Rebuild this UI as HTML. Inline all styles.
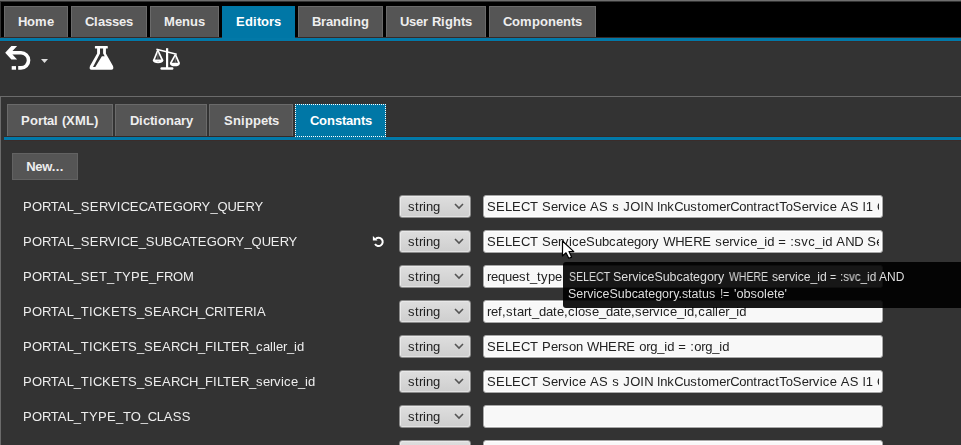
<!DOCTYPE html>
<html><head><meta charset="utf-8">
<style>
html,body{margin:0;padding:0;}
body{width:961px;height:445px;overflow:hidden;position:relative;background:#333;font-family:"Liberation Sans",sans-serif;}
.abs{position:absolute;}
#topline{left:0;top:0;width:961px;height:1px;background:#6e6e6e;}
#topbar{left:1px;top:2px;width:960px;height:35px;background:#000;}
.tab{position:absolute;box-sizing:border-box;background:#555;border:1px solid #6a6a6a;border-bottom:none;color:#eee;font-weight:bold;font-size:13px;text-align:center;white-space:pre;z-index:1;}
.tab.on{background:#0077a6;border-color:#0077a6;color:#fff;z-index:2;}
.mt{top:6px;height:31px;line-height:30px;}
.blue1{left:0;top:37px;width:961px;height:5px;box-sizing:border-box;background:#0279a8;border-top:1px solid #362a28;border-bottom:1px solid #3a2c2a;}
#divider{left:0;top:96px;width:961px;height:1px;background:#6b6b6b;}
#leftline{left:0;top:96px;width:1px;height:349px;background:#6b6b6b;}
.st{top:104px;height:32px;line-height:32px;padding-left:1px;}
.blue2{left:4px;top:136px;width:957px;height:5px;box-sizing:border-box;background:#0279a8;border-top:1px solid #362a28;border-bottom:1px solid #3a2c2a;}
#newbtn{left:12px;top:153px;width:66px;height:27px;box-sizing:border-box;background:#555;border:1px solid #626262;color:#eee;font-weight:bold;font-size:13px;line-height:25px;text-align:center;white-space:pre;}
.lbl{will-change:transform;position:absolute;left:23px;color:#eee;font-size:13px;white-space:pre;}
.sel{position:absolute;left:399px;width:72px;height:23px;box-sizing:border-box;border:1px solid #8a8a8a;border-radius:3px;background:linear-gradient(#dedede,#cecece);box-shadow:inset 1px 1px 0 #e9e9e9,inset -1px -1px 0 #e2e2e2;color:#222;font-size:13px;line-height:21px;padding-left:8px;white-space:pre;}
.gs{will-change:transform;display:inline-block;}
.sel svg{position:absolute;right:6px;top:7px;}
.inp{position:absolute;left:483px;width:400px;height:23px;box-sizing:border-box;border:1px solid #a8a8a8;border-radius:3px;background:#f8f8f8;box-shadow:inset 0 0 0 1px #fff;color:#222;font-size:13px;line-height:21px;padding-left:3px;}
.inp div{will-change:transform;width:392px;overflow:hidden;white-space:pre;}
#tip{left:563px;top:262px;width:420px;height:46px;background:rgba(0,0,0,0.91);border-radius:3px;color:#ddd;font-size:12px;line-height:17px;white-space:pre;z-index:5;}
#tip span{position:absolute;transform-origin:0 0;will-change:transform;}
#cursor{z-index:6;}
</style></head><body>
<div class="abs" id="topline"></div>
<div class="abs" id="topbar"></div>
<div class="tab mt" style="left:4px;width:64px;"><span style="letter-spacing:-0.39px">H</span><span style="letter-spacing:0.06px">o</span><span style="letter-spacing:0.44px">m</span><span style="letter-spacing:-0.23px">e</span></div>
<div class="tab mt" style="left:71px;width:76px;"><span style="letter-spacing:-0.39px">C</span><span style="letter-spacing:0.39px">l</span><span style="letter-spacing:-0.23px">asses</span></div>
<div class="tab mt" style="left:150px;width:69px;"><span style="letter-spacing:0.17px">M</span><span style="letter-spacing:-0.23px">e</span><span style="letter-spacing:0.06px">nu</span><span style="letter-spacing:-0.23px">s</span></div>
<div class="tab mt on" style="left:222px;width:73px;height:32px;"><span style="letter-spacing:0.33px">E</span><span style="letter-spacing:0.06px">d</span><span style="letter-spacing:0.39px">i</span><span style="letter-spacing:-0.33px">t</span><span style="letter-spacing:0.06px">o</span><span style="letter-spacing:-0.06px">r</span><span style="letter-spacing:-0.23px">s</span></div>
<div class="tab mt" style="left:298px;width:85px;"><span style="letter-spacing:-0.39px">B</span><span style="letter-spacing:-0.06px">r</span><span style="letter-spacing:-0.23px">a</span><span style="letter-spacing:0.06px">nd</span><span style="letter-spacing:0.39px">i</span><span style="letter-spacing:0.06px">ng</span></div>
<div class="tab mt" style="left:386px;width:100px;"><span style="letter-spacing:-0.39px">U</span><span style="letter-spacing:-0.23px">se</span><span style="letter-spacing:-0.06px">r</span><span style="letter-spacing:0.39px"> </span><span style="letter-spacing:-0.39px">R</span><span style="letter-spacing:0.39px">i</span><span style="letter-spacing:0.06px">gh</span><span style="letter-spacing:-0.33px">t</span><span style="letter-spacing:-0.23px">s</span></div>
<div class="tab mt" style="left:489px;width:107px;"><span style="letter-spacing:-0.39px">C</span><span style="letter-spacing:0.06px">o</span><span style="letter-spacing:0.44px">m</span><span style="letter-spacing:0.06px">pon</span><span style="letter-spacing:-0.23px">e</span><span style="letter-spacing:0.06px">n</span><span style="letter-spacing:-0.33px">t</span><span style="letter-spacing:-0.23px">s</span></div>
<div class="abs blue1"></div>
<svg class="abs" style="left:0;top:41px" width="200" height="55" viewBox="0 41 200 55">
  <path d="M11 52.8 H21 A7.55 7.55 0 0 1 21 67.9 H18.2" fill="none" stroke="#fff" stroke-width="3.6"/>
  <path d="M5.2 52.8 L11.4 46 H17.1 L12.5 51 V54.6 L17.1 59.6 H11.4 Z" fill="#fff"/>
  <rect x="11.7" y="66.1" width="4.3" height="3.6" fill="#fff"/>
  <path d="M41 59 L48 59 L44.5 63 Z" fill="#ddd"/>
  <path d="M95.4 45.9 H107.3 Q107.8 45.9 107.8 46.4 V47.9 Q107.8 48.4 107.3 48.4 H105.9 V53.4 L113 66 Q114.2 69.8 111.3 69.8 H91.6 Q88.7 69.8 90 66 L97.1 53.4 V48.4 H95.4 Q94.9 48.4 94.9 47.9 V46.4 Q94.9 45.9 95.4 45.9 Z M100 48.4 V53.6 L93 67.1 H95.3 L101.9 56.3 H104.7 L103.1 53.6 V48.4 Z" fill="#fff" fill-rule="evenodd"/>
  <g fill="#fff">
    <rect x="166" y="48.2" width="2.2" height="20"/>
    <rect x="160.4" y="67.2" width="13" height="2.5" rx="1.2"/>
    <path d="M156.6 48.4 L176.9 53.4 L176.5 55.1 L156.2 50.1 Z"/>
  </g>
  <g fill="none" stroke="#fff" stroke-width="1.7" stroke-linejoin="round">
    <path d="M157.8 50.3 L153.8 60.2 M157.8 50.3 L162.4 60.2"/>
    <path d="M175.4 54.6 L170.6 63.4 M175.4 54.6 L179.2 63.4"/>
  </g>
  <g fill="none" stroke="#fff" stroke-width="1.8" stroke-linejoin="round">
    <path d="M153.6 60.3 H162.6 Q162 62.3 158.1 62.3 Q154.2 62.3 153.6 60.3 Z"/>
    <path d="M170.8 63.6 H179 Q178.4 65.4 174.9 65.4 Q171.4 65.4 170.8 63.6 Z"/>
  </g>
  <g stroke="#999" stroke-width="0.7"><path d="M157.9 52 V59.6 M175.3 56.5 V62.8"/></g>
</svg>
<div class="abs" id="divider"></div>
<div class="abs" id="leftline"></div>
<div class="tab st" style="left:7px;width:106px;padding-left:0;padding-right:1px;"><span style="letter-spacing:0.33px">P</span><span style="letter-spacing:0.06px">o</span><span style="letter-spacing:-0.06px">r</span><span style="letter-spacing:-0.33px">t</span><span style="letter-spacing:-0.23px">a</span><span style="letter-spacing:0.39px">l </span><span style="letter-spacing:-0.33px">(</span><span style="letter-spacing:0.33px">X</span><span style="letter-spacing:0.17px">M</span><span style="letter-spacing:0.06px">L</span><span style="letter-spacing:-0.33px">)</span></div>
<div class="tab st" style="left:115px;width:92px;"><span style="letter-spacing:-0.39px">D</span><span style="letter-spacing:0.39px">i</span><span style="letter-spacing:-0.23px">c</span><span style="letter-spacing:-0.33px">t</span><span style="letter-spacing:0.39px">i</span><span style="letter-spacing:0.06px">on</span><span style="letter-spacing:-0.23px">a</span><span style="letter-spacing:-0.06px">r</span><span style="letter-spacing:-0.23px">y</span></div>
<div class="tab st" style="left:209px;width:84px;"><span style="letter-spacing:0.33px">S</span><span style="letter-spacing:0.06px">n</span><span style="letter-spacing:0.39px">i</span><span style="letter-spacing:0.06px">pp</span><span style="letter-spacing:-0.23px">e</span><span style="letter-spacing:-0.33px">t</span><span style="letter-spacing:-0.23px">s</span></div>
<div class="tab st on" style="left:295px;width:91px;height:33px;outline:1px dotted #fff;outline-offset:-1px;"><span style="letter-spacing:-0.39px">C</span><span style="letter-spacing:0.06px">on</span><span style="letter-spacing:-0.23px">s</span><span style="letter-spacing:-0.33px">t</span><span style="letter-spacing:-0.23px">a</span><span style="letter-spacing:0.06px">n</span><span style="letter-spacing:-0.33px">t</span><span style="letter-spacing:-0.23px">s</span></div>
<div class="abs blue2"></div>
<div class="abs" id="newbtn"><span style="letter-spacing:-0.39px">N</span><span style="letter-spacing:-0.23px">e</span><span style="letter-spacing:-0.59px">w</span><span style="letter-spacing:0.39px">...</span></div>
<div class="lbl" style="top:199px"><span style="letter-spacing:0.33px">P</span><span style="letter-spacing:-0.11px">O</span><span style="letter-spacing:-0.62px">R</span><span style="letter-spacing:-0.91px">T</span><span style="letter-spacing:0.33px">A</span><span style="letter-spacing:-0.23px">L_</span><span style="letter-spacing:0.33px">SE</span><span style="letter-spacing:-0.62px">R</span><span style="letter-spacing:0.33px">V</span><span style="letter-spacing:0.39px">I</span><span style="letter-spacing:-0.39px">C</span><span style="letter-spacing:0.33px">E</span><span style="letter-spacing:-0.39px">C</span><span style="letter-spacing:-0.64px">A</span><span style="letter-spacing:0.06px">T</span><span style="letter-spacing:0.33px">E</span><span style="letter-spacing:-0.11px">GO</span><span style="letter-spacing:-0.62px">R</span><span style="letter-spacing:0.33px">Y</span><span style="letter-spacing:-0.23px">_</span><span style="letter-spacing:-0.11px">Q</span><span style="letter-spacing:-0.39px">U</span><span style="letter-spacing:0.33px">E</span><span style="letter-spacing:-0.62px">R</span><span style="letter-spacing:0.33px">Y</span></div>
<div class="sel" style="top:195px"><span class="gs"><span style="letter-spacing:0.5px">s</span><span style="letter-spacing:0.39px">t</span><span style="letter-spacing:-0.33px">r</span><span style="letter-spacing:0.11px">i</span><span style="letter-spacing:-0.23px">ng</span></span><svg width="10" height="7" viewBox="0 0 10 7"><path d="M1 1 L5 5 L9 1" fill="none" stroke="#555" stroke-width="1.6"/></svg></div>
<div class="inp" style="top:195px"><div><span style="letter-spacing:0.33px">SE</span><span style="letter-spacing:-0.23px">L</span><span style="letter-spacing:0.33px">E</span><span style="letter-spacing:-0.39px">C</span><span style="letter-spacing:0.06px">T</span><span style="letter-spacing:0.39px"> </span><span style="letter-spacing:0.33px">S</span><span style="letter-spacing:-0.23px">e</span><span style="letter-spacing:-0.33px">r</span><span style="letter-spacing:0.5px">v</span><span style="letter-spacing:0.11px">i</span><span style="letter-spacing:0.5px">c</span><span style="letter-spacing:-0.23px">e</span><span style="letter-spacing:0.39px"> </span><span style="letter-spacing:0.33px">AS</span><span style="letter-spacing:0.39px"> </span><span style="letter-spacing:0.5px">s</span><span style="letter-spacing:0.39px"> </span><span style="letter-spacing:0.5px">J</span><span style="letter-spacing:-0.11px">O</span><span style="letter-spacing:0.39px">I</span><span style="letter-spacing:-0.39px">N</span><span style="letter-spacing:0.39px"> </span><span style="letter-spacing:0.11px">l</span><span style="letter-spacing:-0.23px">n</span><span style="letter-spacing:0.5px">k</span><span style="letter-spacing:-0.39px">C</span><span style="letter-spacing:-0.23px">u</span><span style="letter-spacing:0.5px">s</span><span style="letter-spacing:0.39px">t</span><span style="letter-spacing:-0.23px">o</span><span style="letter-spacing:0.17px">m</span><span style="letter-spacing:-0.23px">e</span><span style="letter-spacing:-0.33px">r</span><span style="letter-spacing:-0.39px">C</span><span style="letter-spacing:-0.23px">on</span><span style="letter-spacing:0.39px">t</span><span style="letter-spacing:-0.33px">r</span><span style="letter-spacing:-0.23px">a</span><span style="letter-spacing:0.5px">c</span><span style="letter-spacing:0.39px">t</span><span style="letter-spacing:-1.38px">T</span><span style="letter-spacing:-0.23px">o</span><span style="letter-spacing:0.33px">S</span><span style="letter-spacing:-0.23px">e</span><span style="letter-spacing:-0.33px">r</span><span style="letter-spacing:0.5px">v</span><span style="letter-spacing:0.11px">i</span><span style="letter-spacing:0.5px">c</span><span style="letter-spacing:-0.23px">e</span><span style="letter-spacing:0.39px"> </span><span style="letter-spacing:0.33px">AS</span><span style="letter-spacing:0.39px"> </span><span style="letter-spacing:0.11px">l</span><span style="letter-spacing:-0.23px">1</span><span style="letter-spacing:0.39px"> </span><span style="letter-spacing:-0.11px">O</span><span style="letter-spacing:-0.39px">N</span><span style="letter-spacing:0.39px"> </span><span style="letter-spacing:0.11px">l</span><span style="letter-spacing:-0.23px">1</span><span style="letter-spacing:0.39px">.</span><span style="letter-spacing:0.5px">s</span><span style="letter-spacing:-0.23px">e</span><span style="letter-spacing:-0.33px">r</span><span style="letter-spacing:0.5px">v</span><span style="letter-spacing:0.11px">i</span><span style="letter-spacing:0.5px">c</span><span style="letter-spacing:-0.23px">e_</span><span style="letter-spacing:0.11px">i</span><span style="letter-spacing:-0.23px">d</span><span style="letter-spacing:0.41px">=</span><span style="letter-spacing:0.5px">s</span><span style="letter-spacing:0.39px">.</span><span style="letter-spacing:0.11px">i</span><span style="letter-spacing:-0.23px">d</span></div></div>
<div class="lbl" style="top:234px"><span style="letter-spacing:0.33px">P</span><span style="letter-spacing:-0.11px">O</span><span style="letter-spacing:-0.62px">R</span><span style="letter-spacing:-0.91px">T</span><span style="letter-spacing:0.33px">A</span><span style="letter-spacing:-0.23px">L_</span><span style="letter-spacing:0.33px">SE</span><span style="letter-spacing:-0.62px">R</span><span style="letter-spacing:0.33px">V</span><span style="letter-spacing:0.39px">I</span><span style="letter-spacing:-0.39px">C</span><span style="letter-spacing:0.33px">E</span><span style="letter-spacing:-0.23px">_</span><span style="letter-spacing:0.33px">S</span><span style="letter-spacing:-0.39px">U</span><span style="letter-spacing:0.33px">B</span><span style="letter-spacing:-0.39px">C</span><span style="letter-spacing:-0.64px">A</span><span style="letter-spacing:0.06px">T</span><span style="letter-spacing:0.33px">E</span><span style="letter-spacing:-0.11px">GO</span><span style="letter-spacing:-0.62px">R</span><span style="letter-spacing:0.33px">Y</span><span style="letter-spacing:-0.23px">_</span><span style="letter-spacing:-0.11px">Q</span><span style="letter-spacing:-0.39px">U</span><span style="letter-spacing:0.33px">E</span><span style="letter-spacing:-0.62px">R</span><span style="letter-spacing:0.33px">Y</span></div>
<svg class="abs" style="left:370px;top:233px" width="17" height="17" viewBox="0 0 17 17"><path d="M5.7 6.0 A4.1 4.1 0 1 1 5.05 10.95" fill="none" stroke="#fff" stroke-width="2"/><path d="M2.9 2.9 L7.5 7.6 L2.9 7.6 Z" fill="#fff"/></svg>
<div class="sel" style="top:230px"><span class="gs"><span style="letter-spacing:0.5px">s</span><span style="letter-spacing:0.39px">t</span><span style="letter-spacing:-0.33px">r</span><span style="letter-spacing:0.11px">i</span><span style="letter-spacing:-0.23px">ng</span></span><svg width="10" height="7" viewBox="0 0 10 7"><path d="M1 1 L5 5 L9 1" fill="none" stroke="#555" stroke-width="1.6"/></svg></div>
<div class="inp" style="top:230px"><div><span style="letter-spacing:0.33px">SE</span><span style="letter-spacing:-0.23px">L</span><span style="letter-spacing:0.33px">E</span><span style="letter-spacing:-0.39px">C</span><span style="letter-spacing:0.06px">T</span><span style="letter-spacing:0.39px"> </span><span style="letter-spacing:0.33px">S</span><span style="letter-spacing:-0.23px">e</span><span style="letter-spacing:-0.33px">r</span><span style="letter-spacing:0.5px">v</span><span style="letter-spacing:0.11px">i</span><span style="letter-spacing:0.5px">c</span><span style="letter-spacing:-0.23px">e</span><span style="letter-spacing:0.33px">S</span><span style="letter-spacing:-0.23px">ub</span><span style="letter-spacing:0.5px">c</span><span style="letter-spacing:-0.23px">a</span><span style="letter-spacing:0.39px">t</span><span style="letter-spacing:-0.23px">ego</span><span style="letter-spacing:-0.33px">r</span><span style="letter-spacing:0.5px">y</span><span style="letter-spacing:0.39px"> </span><span style="letter-spacing:-0.27px">W</span><span style="letter-spacing:-0.39px">H</span><span style="letter-spacing:0.33px">E</span><span style="letter-spacing:-0.39px">R</span><span style="letter-spacing:0.33px">E</span><span style="letter-spacing:0.39px"> </span><span style="letter-spacing:0.5px">s</span><span style="letter-spacing:-0.23px">e</span><span style="letter-spacing:-0.33px">r</span><span style="letter-spacing:0.5px">v</span><span style="letter-spacing:0.11px">i</span><span style="letter-spacing:0.5px">c</span><span style="letter-spacing:-0.23px">e_</span><span style="letter-spacing:0.11px">i</span><span style="letter-spacing:-0.23px">d</span><span style="letter-spacing:0.39px"> </span><span style="letter-spacing:0.41px">=</span><span style="letter-spacing:0.39px"> :</span><span style="letter-spacing:0.5px">svc</span><span style="letter-spacing:-0.23px">_</span><span style="letter-spacing:0.11px">i</span><span style="letter-spacing:-0.23px">d</span><span style="letter-spacing:0.39px"> </span><span style="letter-spacing:0.33px">A</span><span style="letter-spacing:-0.39px">ND</span><span style="letter-spacing:0.39px"> </span><span style="letter-spacing:0.33px">S</span><span style="letter-spacing:-0.23px">e</span><span style="letter-spacing:-0.33px">r</span><span style="letter-spacing:0.5px">v</span><span style="letter-spacing:0.11px">i</span><span style="letter-spacing:0.5px">c</span><span style="letter-spacing:-0.23px">e</span><span style="letter-spacing:0.33px">S</span><span style="letter-spacing:-0.23px">ub</span><span style="letter-spacing:0.5px">c</span><span style="letter-spacing:-0.23px">a</span><span style="letter-spacing:0.39px">t</span><span style="letter-spacing:-0.23px">ego</span><span style="letter-spacing:-0.33px">r</span><span style="letter-spacing:-0.47px">y</span><span style="letter-spacing:0.39px">.</span><span style="letter-spacing:0.5px">s</span><span style="letter-spacing:0.39px">t</span><span style="letter-spacing:-0.23px">a</span><span style="letter-spacing:0.39px">t</span><span style="letter-spacing:-0.23px">u</span><span style="letter-spacing:0.5px">s</span></div></div>
<div class="lbl" style="top:269px"><span style="letter-spacing:0.33px">P</span><span style="letter-spacing:-0.11px">O</span><span style="letter-spacing:-0.62px">R</span><span style="letter-spacing:-0.91px">T</span><span style="letter-spacing:0.33px">A</span><span style="letter-spacing:-0.23px">L_</span><span style="letter-spacing:0.33px">SE</span><span style="letter-spacing:0.06px">T</span><span style="letter-spacing:-0.23px">_</span><span style="letter-spacing:0.06px">T</span><span style="letter-spacing:0.33px">YPE</span><span style="letter-spacing:-0.23px">_</span><span style="letter-spacing:0.06px">F</span><span style="letter-spacing:-0.39px">R</span><span style="letter-spacing:-0.11px">O</span><span style="letter-spacing:0.17px">M</span></div>
<div class="sel" style="top:265px"><span class="gs"><span style="letter-spacing:0.5px">s</span><span style="letter-spacing:0.39px">t</span><span style="letter-spacing:-0.33px">r</span><span style="letter-spacing:0.11px">i</span><span style="letter-spacing:-0.23px">ng</span></span><svg width="10" height="7" viewBox="0 0 10 7"><path d="M1 1 L5 5 L9 1" fill="none" stroke="#555" stroke-width="1.6"/></svg></div>
<div class="inp" style="top:265px"><div><span style="letter-spacing:-0.33px">r</span><span style="letter-spacing:-0.23px">eque</span><span style="letter-spacing:0.5px">s</span><span style="letter-spacing:0.39px">t</span><span style="letter-spacing:-0.23px">_</span><span style="letter-spacing:0.39px">t</span><span style="letter-spacing:0.5px">y</span><span style="letter-spacing:-0.23px">pe</span></div></div>
<div class="lbl" style="top:304px"><span style="letter-spacing:0.33px">P</span><span style="letter-spacing:-0.11px">O</span><span style="letter-spacing:-0.62px">R</span><span style="letter-spacing:-0.91px">T</span><span style="letter-spacing:0.33px">A</span><span style="letter-spacing:-0.23px">L_</span><span style="letter-spacing:0.06px">T</span><span style="letter-spacing:0.39px">I</span><span style="letter-spacing:-0.39px">C</span><span style="letter-spacing:0.33px">KE</span><span style="letter-spacing:0.06px">T</span><span style="letter-spacing:0.33px">S</span><span style="letter-spacing:-0.23px">_</span><span style="letter-spacing:0.33px">SEA</span><span style="letter-spacing:-0.39px">RCH</span><span style="letter-spacing:-0.23px">_</span><span style="letter-spacing:-0.39px">CR</span><span style="letter-spacing:0.39px">I</span><span style="letter-spacing:0.06px">T</span><span style="letter-spacing:0.33px">E</span><span style="letter-spacing:-0.39px">R</span><span style="letter-spacing:0.39px">I</span><span style="letter-spacing:0.33px">A</span></div>
<div class="sel" style="top:300px"><span class="gs"><span style="letter-spacing:0.5px">s</span><span style="letter-spacing:0.39px">t</span><span style="letter-spacing:-0.33px">r</span><span style="letter-spacing:0.11px">i</span><span style="letter-spacing:-0.23px">ng</span></span><svg width="10" height="7" viewBox="0 0 10 7"><path d="M1 1 L5 5 L9 1" fill="none" stroke="#555" stroke-width="1.6"/></svg></div>
<div class="inp" style="top:300px"><div><span style="letter-spacing:-0.33px">r</span><span style="letter-spacing:-0.23px">e</span><span style="letter-spacing:0.39px">f,</span><span style="letter-spacing:0.5px">s</span><span style="letter-spacing:0.39px">t</span><span style="letter-spacing:-0.23px">a</span><span style="letter-spacing:-0.33px">r</span><span style="letter-spacing:0.39px">t</span><span style="letter-spacing:-0.23px">_da</span><span style="letter-spacing:0.39px">t</span><span style="letter-spacing:-0.23px">e</span><span style="letter-spacing:0.39px">,</span><span style="letter-spacing:0.5px">c</span><span style="letter-spacing:0.11px">l</span><span style="letter-spacing:-0.23px">o</span><span style="letter-spacing:0.5px">s</span><span style="letter-spacing:-0.23px">e_da</span><span style="letter-spacing:0.39px">t</span><span style="letter-spacing:-0.23px">e</span><span style="letter-spacing:0.39px">,</span><span style="letter-spacing:0.5px">s</span><span style="letter-spacing:-0.23px">e</span><span style="letter-spacing:-0.33px">r</span><span style="letter-spacing:0.5px">v</span><span style="letter-spacing:0.11px">i</span><span style="letter-spacing:0.5px">c</span><span style="letter-spacing:-0.23px">e_</span><span style="letter-spacing:0.11px">i</span><span style="letter-spacing:-0.23px">d</span><span style="letter-spacing:0.39px">,</span><span style="letter-spacing:0.5px">c</span><span style="letter-spacing:-0.23px">a</span><span style="letter-spacing:0.11px">ll</span><span style="letter-spacing:-0.23px">e</span><span style="letter-spacing:-0.33px">r</span><span style="letter-spacing:-0.23px">_</span><span style="letter-spacing:0.11px">i</span><span style="letter-spacing:-0.23px">d</span></div></div>
<div class="lbl" style="top:339px"><span style="letter-spacing:0.33px">P</span><span style="letter-spacing:-0.11px">O</span><span style="letter-spacing:-0.62px">R</span><span style="letter-spacing:-0.91px">T</span><span style="letter-spacing:0.33px">A</span><span style="letter-spacing:-0.23px">L_</span><span style="letter-spacing:0.06px">T</span><span style="letter-spacing:0.39px">I</span><span style="letter-spacing:-0.39px">C</span><span style="letter-spacing:0.33px">KE</span><span style="letter-spacing:0.06px">T</span><span style="letter-spacing:0.33px">S</span><span style="letter-spacing:-0.23px">_</span><span style="letter-spacing:0.33px">SEA</span><span style="letter-spacing:-0.39px">RCH</span><span style="letter-spacing:-0.23px">_</span><span style="letter-spacing:0.06px">F</span><span style="letter-spacing:0.39px">I</span><span style="letter-spacing:-1.19px">L</span><span style="letter-spacing:0.06px">T</span><span style="letter-spacing:0.33px">E</span><span style="letter-spacing:-0.39px">R</span><span style="letter-spacing:-0.23px">_</span><span style="letter-spacing:0.5px">c</span><span style="letter-spacing:-0.23px">a</span><span style="letter-spacing:0.11px">ll</span><span style="letter-spacing:-0.23px">e</span><span style="letter-spacing:-0.33px">r</span><span style="letter-spacing:-0.23px">_</span><span style="letter-spacing:0.11px">i</span><span style="letter-spacing:-0.23px">d</span></div>
<div class="sel" style="top:335px"><span class="gs"><span style="letter-spacing:0.5px">s</span><span style="letter-spacing:0.39px">t</span><span style="letter-spacing:-0.33px">r</span><span style="letter-spacing:0.11px">i</span><span style="letter-spacing:-0.23px">ng</span></span><svg width="10" height="7" viewBox="0 0 10 7"><path d="M1 1 L5 5 L9 1" fill="none" stroke="#555" stroke-width="1.6"/></svg></div>
<div class="inp" style="top:335px"><div><span style="letter-spacing:0.33px">SE</span><span style="letter-spacing:-0.23px">L</span><span style="letter-spacing:0.33px">E</span><span style="letter-spacing:-0.39px">C</span><span style="letter-spacing:0.06px">T</span><span style="letter-spacing:0.39px"> </span><span style="letter-spacing:0.33px">P</span><span style="letter-spacing:-0.23px">e</span><span style="letter-spacing:-0.33px">r</span><span style="letter-spacing:0.5px">s</span><span style="letter-spacing:-0.23px">on</span><span style="letter-spacing:0.39px"> </span><span style="letter-spacing:-0.27px">W</span><span style="letter-spacing:-0.39px">H</span><span style="letter-spacing:0.33px">E</span><span style="letter-spacing:-0.39px">R</span><span style="letter-spacing:0.33px">E</span><span style="letter-spacing:0.39px"> </span><span style="letter-spacing:-0.23px">o</span><span style="letter-spacing:-0.33px">r</span><span style="letter-spacing:-0.23px">g_</span><span style="letter-spacing:0.11px">i</span><span style="letter-spacing:-0.23px">d</span><span style="letter-spacing:0.39px"> </span><span style="letter-spacing:0.41px">=</span><span style="letter-spacing:0.39px"> :</span><span style="letter-spacing:-0.23px">o</span><span style="letter-spacing:-0.33px">r</span><span style="letter-spacing:-0.23px">g_</span><span style="letter-spacing:0.11px">i</span><span style="letter-spacing:-0.23px">d</span></div></div>
<div class="lbl" style="top:374px"><span style="letter-spacing:0.33px">P</span><span style="letter-spacing:-0.11px">O</span><span style="letter-spacing:-0.62px">R</span><span style="letter-spacing:-0.91px">T</span><span style="letter-spacing:0.33px">A</span><span style="letter-spacing:-0.23px">L_</span><span style="letter-spacing:0.06px">T</span><span style="letter-spacing:0.39px">I</span><span style="letter-spacing:-0.39px">C</span><span style="letter-spacing:0.33px">KE</span><span style="letter-spacing:0.06px">T</span><span style="letter-spacing:0.33px">S</span><span style="letter-spacing:-0.23px">_</span><span style="letter-spacing:0.33px">SEA</span><span style="letter-spacing:-0.39px">RCH</span><span style="letter-spacing:-0.23px">_</span><span style="letter-spacing:0.06px">F</span><span style="letter-spacing:0.39px">I</span><span style="letter-spacing:-1.19px">L</span><span style="letter-spacing:0.06px">T</span><span style="letter-spacing:0.33px">E</span><span style="letter-spacing:-0.39px">R</span><span style="letter-spacing:-0.23px">_</span><span style="letter-spacing:0.5px">s</span><span style="letter-spacing:-0.23px">e</span><span style="letter-spacing:-0.33px">r</span><span style="letter-spacing:0.5px">v</span><span style="letter-spacing:0.11px">i</span><span style="letter-spacing:0.5px">c</span><span style="letter-spacing:-0.23px">e_</span><span style="letter-spacing:0.11px">i</span><span style="letter-spacing:-0.23px">d</span></div>
<div class="sel" style="top:370px"><span class="gs"><span style="letter-spacing:0.5px">s</span><span style="letter-spacing:0.39px">t</span><span style="letter-spacing:-0.33px">r</span><span style="letter-spacing:0.11px">i</span><span style="letter-spacing:-0.23px">ng</span></span><svg width="10" height="7" viewBox="0 0 10 7"><path d="M1 1 L5 5 L9 1" fill="none" stroke="#555" stroke-width="1.6"/></svg></div>
<div class="inp" style="top:370px"><div><span style="letter-spacing:0.33px">SE</span><span style="letter-spacing:-0.23px">L</span><span style="letter-spacing:0.33px">E</span><span style="letter-spacing:-0.39px">C</span><span style="letter-spacing:0.06px">T</span><span style="letter-spacing:0.39px"> </span><span style="letter-spacing:0.33px">S</span><span style="letter-spacing:-0.23px">e</span><span style="letter-spacing:-0.33px">r</span><span style="letter-spacing:0.5px">v</span><span style="letter-spacing:0.11px">i</span><span style="letter-spacing:0.5px">c</span><span style="letter-spacing:-0.23px">e</span><span style="letter-spacing:0.39px"> </span><span style="letter-spacing:0.33px">AS</span><span style="letter-spacing:0.39px"> </span><span style="letter-spacing:0.5px">s</span><span style="letter-spacing:0.39px"> </span><span style="letter-spacing:0.5px">J</span><span style="letter-spacing:-0.11px">O</span><span style="letter-spacing:0.39px">I</span><span style="letter-spacing:-0.39px">N</span><span style="letter-spacing:0.39px"> </span><span style="letter-spacing:0.11px">l</span><span style="letter-spacing:-0.23px">n</span><span style="letter-spacing:0.5px">k</span><span style="letter-spacing:-0.39px">C</span><span style="letter-spacing:-0.23px">u</span><span style="letter-spacing:0.5px">s</span><span style="letter-spacing:0.39px">t</span><span style="letter-spacing:-0.23px">o</span><span style="letter-spacing:0.17px">m</span><span style="letter-spacing:-0.23px">e</span><span style="letter-spacing:-0.33px">r</span><span style="letter-spacing:-0.39px">C</span><span style="letter-spacing:-0.23px">on</span><span style="letter-spacing:0.39px">t</span><span style="letter-spacing:-0.33px">r</span><span style="letter-spacing:-0.23px">a</span><span style="letter-spacing:0.5px">c</span><span style="letter-spacing:0.39px">t</span><span style="letter-spacing:-1.38px">T</span><span style="letter-spacing:-0.23px">o</span><span style="letter-spacing:0.33px">S</span><span style="letter-spacing:-0.23px">e</span><span style="letter-spacing:-0.33px">r</span><span style="letter-spacing:0.5px">v</span><span style="letter-spacing:0.11px">i</span><span style="letter-spacing:0.5px">c</span><span style="letter-spacing:-0.23px">e</span><span style="letter-spacing:0.39px"> </span><span style="letter-spacing:0.33px">AS</span><span style="letter-spacing:0.39px"> </span><span style="letter-spacing:0.11px">l</span><span style="letter-spacing:-0.23px">1</span><span style="letter-spacing:0.39px"> </span><span style="letter-spacing:-0.11px">O</span><span style="letter-spacing:-0.39px">N</span><span style="letter-spacing:0.39px"> </span><span style="letter-spacing:0.11px">l</span><span style="letter-spacing:-0.23px">1</span><span style="letter-spacing:0.39px">.</span><span style="letter-spacing:0.5px">s</span><span style="letter-spacing:-0.23px">e</span><span style="letter-spacing:-0.33px">r</span><span style="letter-spacing:0.5px">v</span><span style="letter-spacing:0.11px">i</span><span style="letter-spacing:0.5px">c</span><span style="letter-spacing:-0.23px">e_</span><span style="letter-spacing:0.11px">i</span><span style="letter-spacing:-0.23px">d</span><span style="letter-spacing:0.41px">=</span><span style="letter-spacing:0.5px">s</span><span style="letter-spacing:0.39px">.</span><span style="letter-spacing:0.11px">i</span><span style="letter-spacing:-0.23px">d</span></div></div>
<div class="lbl" style="top:409px"><span style="letter-spacing:0.33px">P</span><span style="letter-spacing:-0.11px">O</span><span style="letter-spacing:-0.62px">R</span><span style="letter-spacing:-0.91px">T</span><span style="letter-spacing:0.33px">A</span><span style="letter-spacing:-0.23px">L_</span><span style="letter-spacing:0.06px">T</span><span style="letter-spacing:0.33px">YPE</span><span style="letter-spacing:-0.23px">_</span><span style="letter-spacing:-0.17px">T</span><span style="letter-spacing:-0.11px">O</span><span style="letter-spacing:-0.23px">_</span><span style="letter-spacing:-0.39px">C</span><span style="letter-spacing:-0.23px">L</span><span style="letter-spacing:0.33px">ASS</span></div>
<div class="sel" style="top:405px"><span class="gs"><span style="letter-spacing:0.5px">s</span><span style="letter-spacing:0.39px">t</span><span style="letter-spacing:-0.33px">r</span><span style="letter-spacing:0.11px">i</span><span style="letter-spacing:-0.23px">ng</span></span><svg width="10" height="7" viewBox="0 0 10 7"><path d="M1 1 L5 5 L9 1" fill="none" stroke="#555" stroke-width="1.6"/></svg></div>
<div class="inp" style="top:405px"><div></div></div>
<div class="sel" style="top:440px"><span class="gs"><span style="letter-spacing:0.5px">s</span><span style="letter-spacing:0.39px">t</span><span style="letter-spacing:-0.33px">r</span><span style="letter-spacing:0.11px">i</span><span style="letter-spacing:-0.23px">ng</span></span><svg width="10" height="7" viewBox="0 0 10 7"><path d="M1 1 L5 5 L9 1" fill="none" stroke="#555" stroke-width="1.6"/></svg></div>
<div class="inp" style="top:440px"><div></div></div>
<div class="abs" id="tip"><span style="left:5.52px;top:7px;transform:scaleX(0.883)">SELECT</span><span style="left:50.27px;top:7px;transform:scaleX(1.035)">ServiceSubcategory</span><span style="left:165.70px;top:7px;transform:scaleX(0.873)">WHERE</span><span style="left:209.40px;top:7px;transform:scaleX(1.015)">service_id</span><span style="left:267.00px;top:7px;transform:scaleX(0.886)">=</span><span style="left:276.63px;top:7px;transform:scaleX(0.969)">:svc_id</span><span style="left:316.30px;top:7px;transform:scaleX(1.000)">AND</span><span style="left:5.36px;top:24px;transform:scaleX(1.037)">ServiceSubcategory.status</span><span style="left:156.70px;top:24px;transform:scaleX(0.900)">!=</span><span style="left:170.70px;top:24px;transform:scaleX(1.062)">&#39;obsolete&#39;</span></div>
<svg class="abs" id="cursor" style="left:560px;top:239px" width="20" height="22" viewBox="0 0 20 22"><path d="M2.5 2 V17 L6 13.8 L8.8 19.3 L11.6 18.1 L9 12.6 L13.8 12.6 Z" fill="#fff" stroke="#000" stroke-width="1.2" stroke-linejoin="round"/></svg>
</body></html>
